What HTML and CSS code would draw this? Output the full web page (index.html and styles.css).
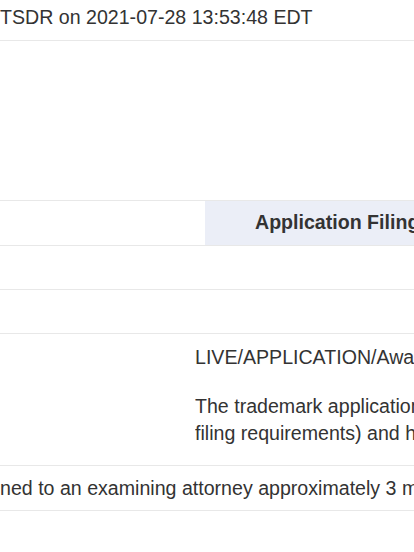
FILE: index.html
```html
<!DOCTYPE html>
<html lang="en">
  <head>
    <meta charset="UTF-8" />
    <meta name="viewport" content="width=device-width, initial-scale=1.0" />
    <title>TSDR Status</title>
    <link rel="stylesheet" href="styles.css">
  </head>
  <body>
    <div class="page">
      <div class="generated">TSDR on 2021-07-28 13:53:48 EDT</div>

      <div class="status-table">
        <div class="row head-row">
          <div class="label"></div>
          <div class="head-cell">Application Filing Receipt</div>
        </div>
        <div class="row empty-row"></div>
        <div class="row empty-row"></div>
        <div class="row status-row">
          <div class="label"></div>
          <div class="value">
            <div class="status-line">LIVE/APPLICATION/Awaiting Examination</div>
            <p class="status-text">The trademark application has been accepted by the Office (has met the minimum<br>
              filing requirements) and has not yet been assigned to an examiner.</p>
          </div>
        </div>
        <div class="row note-row">
          <div class="note">ned to an examining attorney approximately 3 months after filing.</div>
        </div>
      </div>
    </div>
  </body>
</html>
```

FILE: styles.css
```css
/* Page */
html,
body {
  margin: 0;
  overflow: hidden;
  background-color: #fff;
}

.page {
  font-family: "Liberation Sans", Arial, sans-serif;
  font-size: 19.6px;
  line-height: 27px;
  color: #333;
  white-space: nowrap;
}

.generated {
  padding: 4px 0 9px;
  border-bottom: 1px solid #e8e8e8;
}

/* Status table */
.status-table {
  margin-top: 159px;
  border-top: 1px solid #e8e8e8;
}

.row {
  display: grid;
  border-bottom: 1px solid #e8e8e8;
}

.head-row {
  grid-template-columns: 205px 1fr;
}

.head-cell {
  background-color: #ebeef7;
  font-weight: bold;
  padding: 8px 0 9px 50px;
  overflow: hidden;
}

.empty-row {
  height: 43px;
}

.status-row {
  grid-template-columns: 195px 1fr;
  margin-top: 1px;
}

.value {
  padding: 9px 0 8px;
  overflow: hidden;
}

.status-line {
  margin-bottom: 22px;
}

.status-text {
  margin: 0 0 10px;
}

.note-row {
  display: block;
}

.note {
  padding: 9px 0 8px;
}
```
